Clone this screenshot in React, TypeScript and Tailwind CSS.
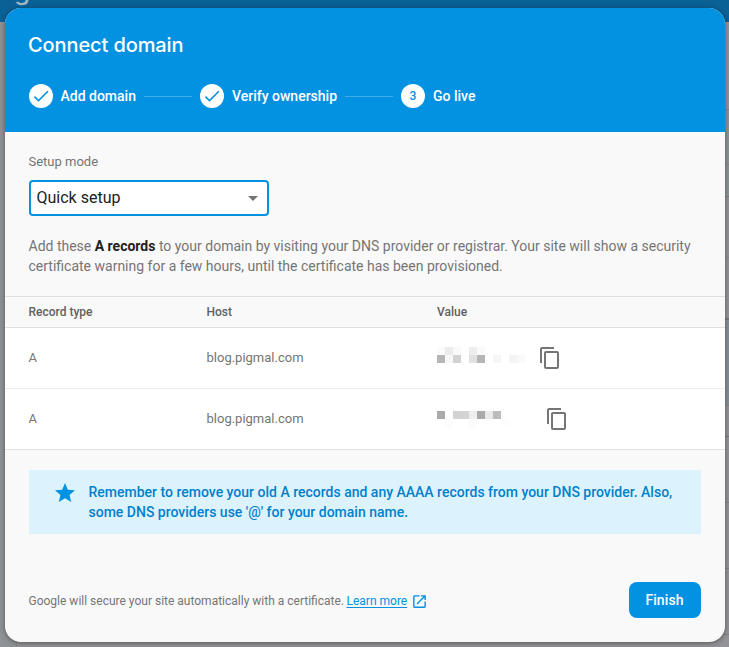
import React from "react";

const CHECK = "M9 16.17L4.83 12l-1.42 1.41L9 19 21 7l-1.41-1.41z";
const COPY =
  "M16 1H4c-1.1 0-2 .9-2 2v14h2V3h12V1zm3 4H8c-1.1 0-2 .9-2 2v14c0 1.1.9 2 2 2h11c1.1 0 2-.9 2-2V7c0-1.1-.9-2-2-2zm0 16H8V7h11v14z";
const STAR =
  "M12 17.27L18.18 21l-1.64-7.03L22 9.24l-7.19-.61L12 2 9.19 8.63 2 9.24l5.46 4.73L5.82 21z";
const OPEN =
  "M19 19H5V5h7V3H5c-1.11 0-2 .9-2 2v14c0 1.1.89 2 2 2h14c1.1 0 2-.9 2-2v-7h-2v7zM14 3v2h3.59l-9.83 9.83 1.41 1.41L19 6.41V10h2V3h-7z";

function Icon({ d, className }: { d: string; className: string }) {
  return (
    <svg viewBox="0 0 24 24" fill="currentColor" className={className}>
      <path d={d} />
    </svg>
  );
}

function Step({ label, width, number }: { label: string; width: string; number?: number }) {
  return (
    <div className="flex items-center gap-2">
      <div className="flex size-6 items-center justify-center rounded-full bg-white text-xs font-medium text-[#0391e2]">
        {number ?? <Icon d={CHECK} className="size-5" />}
      </div>
      <span className={`whitespace-nowrap text-sm font-medium text-white ${width}`}>{label}</span>
    </div>
  );
}

/* Redacted address, one 8px cell per grey value */
function Mosaic({ rows }: { rows: string[][] }) {
  return (
    <div className="w-[88px]">
      {rows.map((row, i) => (
        <div key={i} className="flex">
          {row.map((c, j) => (
            <div key={j} className="size-2" style={{ backgroundColor: c }} />
          ))}
        </div>
      ))}
    </div>
  );
}

const W = "#ffffff";
const FIRST = [
  ["#fbfbfb", "#ececec", "#f9f9f9", W, "#ededed", "#fafafa", W, W, W, W, W],
  ["#b5b5b5", "#f7f7f7", "#d2d2d2", W, "#e1e1e1", "#b5b5b5", W, "#f5f5f5", W, "#f4f4f4", "#f9f9f9"],
];
const SECOND = [
  ["#ababab", W, "#d2d2d2", "#d4d4d4", "#eeeeee", "#aaaaaa", "#e9e9e9", "#bcbcbc", W, W, W],
  [W, "#fcfcfc", W, W, "#fbfbfb", W, W, W, "#fdfdfd", W, W],
];

export default function App() {
  return (
    <div className="relative h-[647px] w-[729px] overflow-hidden bg-[#929297] font-['Roboto','Liberation_Sans',sans-serif]">
      <div className="absolute inset-x-0 top-0 h-[22px] bg-[#0a6195]">
        <span className="absolute left-[14px] top-[-21px] font-['Inter',sans-serif] text-[26px] font-medium leading-6 text-[#9fb6c5]">g</span>
      </div>
      <div className="absolute bottom-0 left-0 top-[22px] w-[17px] border-r border-[#85868a] bg-[#8e9195]" />
      <div className="absolute right-0 top-[109px] h-[56px] w-3 border-y border-[#828488] bg-[#8e9195]" />
      <div className="absolute right-0 top-[165px] h-[32px] w-3 border-b border-[#7d7f83] bg-[#8e9195]" />
      <div className="absolute right-0 top-[257px] h-px w-3 bg-[#88888c]" />
      <div className="absolute right-0 top-[318px] h-[88px] w-3 border-b border-t-2 border-b-[#85868a] border-t-[#77797d] bg-[#868e95]" />
      <div className="absolute right-0 top-[436px] h-px w-3 bg-[#77797d]" />
      <div className="absolute right-0 top-[502px] h-px w-3 bg-[#828387]" />
      <div className="absolute right-0 top-[568px] h-px w-3 bg-[#828387]" />
      <div className="absolute right-0 top-[634px] h-px w-3 bg-[#828387]" />

      <main className="absolute left-[5px] top-2 flex h-[634px] w-[720px] flex-col overflow-hidden rounded-2xl bg-[#f9f9f9] shadow-[0_1px_5px_rgba(0,0,0,0.4)]">
        <header className="h-[124px] shrink-0 bg-[#0391e2] px-6 pt-[25px]">
          <h1 className="-ml-px w-fit whitespace-nowrap font-['Inter',sans-serif] text-[20px] font-medium leading-6 tracking-[-0.1px] text-white">Connect domain</h1>
          <div className="mt-[27px] flex items-center gap-2">
            <Step label="Add domain" width="w-[75px] -ml-[0.5px] mr-[0.5px]" />
            <div className="h-px w-12 bg-[#42ace9]" />
            <Step label="Verify ownership" width="w-[105px]" />
            <div className="h-px w-12 bg-[#42ace9]" />
            <Step label="Go live" width="w-[44px]" number={3} />
          </div>
        </header>

        <section className="h-[164px] shrink-0 px-6 pt-5 text-[#757575]">
          <p className="-ml-[0.5px] text-[13px] leading-5">Setup mode</p>
          <div className="mt-2 flex h-9 w-60 items-center justify-between rounded border-2 border-[#0391e2] bg-white pl-[5.5px] pr-[9px] text-base text-[#212121]">
            <span>Quick setup</span>
            <span className="border-x-5 border-t-5 border-x-transparent border-t-[#757575]" />
          </div>
          <p className="-ml-[0.5px] mt-5 whitespace-nowrap text-sm leading-5">
            Add these <b className="text-[#212121]">A records</b> to your domain by visiting your DNS provider or registrar. Your site will show a security
            <br />
            certificate warning for a few hours, until the certificate has been provisioned.
          </p>
        </section>

        <section className="shrink-0 text-[13px] text-[#757575]">
          <div className="flex h-8 items-center border-y border-[#e0e0e0] pl-[23.5px] text-xs font-medium text-[#616161]">
            <span className="w-[178px]">Record type</span>
            <span className="w-[230.5px]">Host</span>
            <span>Value</span>
          </div>
          <div className="flex h-[61px] items-center border-b border-[#ececec] bg-white pl-[23.5px]">
            <span className="w-[178px]">A</span>
            <span className="w-[230.5px]">blog.pigmal.com</span>
            <div className="-mt-1.5"><Mosaic rows={FIRST} /></div>
            <Icon d={COPY} className="ml-[13px] size-6" />
          </div>
          <div className="flex h-[61px] items-center border-b border-[#e0e0e0] bg-white pl-[23.5px]">
            <span className="w-[178px]">A</span>
            <span className="w-[230.5px]">blog.pigmal.com</span>
            <div><Mosaic rows={SECOND} /></div>
            <Icon d={COPY} className="ml-[20.4px] size-6" />
          </div>
        </section>

        <div className="mx-6 mt-5 flex h-16 shrink-0 bg-[#dcf3fe] pl-[23.5px] pt-3 text-[#0280cb]">
          <Icon d={STAR} className="-mt-px size-6 text-[#0391e2]" />
          <p className="ml-3 whitespace-nowrap text-sm font-medium leading-5">
            Remember to remove your old A records and any AAAA records from your DNS provider. Also,
            <br />
            some DNS providers use '@' for your domain name.
          </p>
        </div>

        <footer className="mt-12 flex h-9 items-center pl-[23.5px] pr-6 text-xs text-[#757575]">
          <span className="whitespace-pre pt-0.5">Google will secure your site automatically with a certificate. </span>
          <a className="-ml-[0.5px] pt-0.5 text-[#0391e2] underline underline-offset-2">Learn more</a>
          <Icon d={OPEN} className="ml-[3.5px] mt-[3px] size-[17px] text-[#0391e2]" />
          <button className="ml-auto h-9 w-[72px] rounded-lg bg-[#0391e2] pr-px text-sm font-medium tracking-[0.1px] text-white">Finish</button>
        </footer>
      </main>
    </div>
  );
}
